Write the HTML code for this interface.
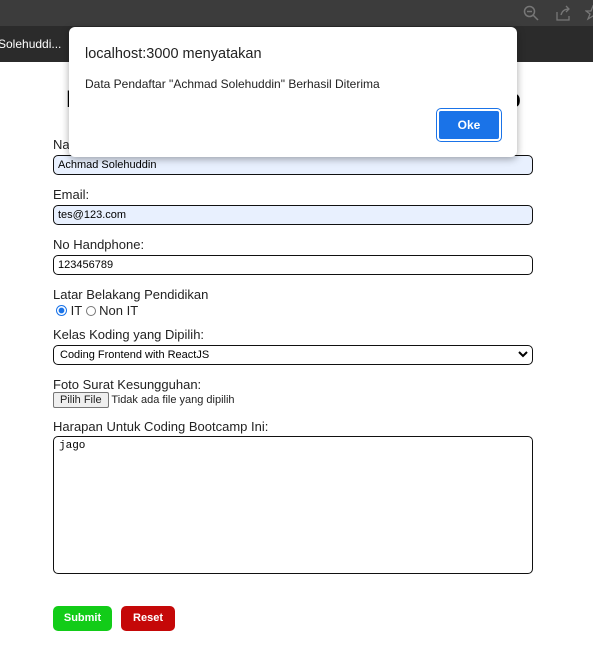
<!DOCTYPE html>
<html><head><style>
body{margin:0;width:593px;height:666px;position:relative;background:#fff;font-family:"Liberation Sans",Arial,sans-serif;overflow:hidden}
.top{position:absolute;left:0;top:0;width:593px;height:26px;background:#3c3c3c}
.tab{position:absolute;left:0;top:26px;width:593px;height:36px;background:#2b2b2b;color:#fff;font-size:12px}
.tab span{position:absolute;left:-2px;top:11px}
.a{position:absolute;left:53px;font-size:13px;color:#222}
.in{position:absolute;left:53px;width:480px;height:20px;border:1px solid #111;border-radius:5px;font-size:11px;line-height:18px;padding-left:4px;box-sizing:border-box}
h1{position:absolute;left:0;width:587px;top:86px;margin:0;text-align:center;font-size:24.5px;font-weight:bold}
.dlg{position:absolute;left:69px;top:27px;width:448px;height:130px;background:#fff;border-radius:6px;box-shadow:0 2px 8px rgba(0,0,0,.35)}
.btn{position:absolute;top:606px;height:25px;border-radius:5px;color:#fff;font-size:11px;font-weight:bold;text-align:center;line-height:25px}
</style></head><body>
<div class="top">
<svg style="position:absolute;left:523px;top:5px" width="16" height="16" fill="none" stroke="#777" stroke-width="1.5"><circle cx="6.5" cy="6.5" r="5"/><path d="M4 6.5h5M10 10l5 5"/></svg>
<svg style="position:absolute;left:555px;top:5px" width="16" height="16" fill="none" stroke="#777" stroke-width="1.3"><path d="M2 7v8h12v-4M6 10c1-4 4-6 8-6M11 1l3 3-3 3"/></svg>
<svg style="position:absolute;left:585px;top:5px" width="16" height="16" fill="none" stroke="#777" stroke-width="1.3"><path d="M8 1l2 5h5l-4 3 2 5-5-3-5 3 2-5-4-3h5z"/></svg>
</div>
<div class="tab"><span>Solehuddi...</span></div>
<h1>Pendaftaran Peserta Coding Bootcamp</h1>
<div class="a" style="top:137px">Nama Lengkap:</div>
<div class="in" style="top:155px;background:#e8f0fe">Achmad Solehuddin</div>
<div class="a" style="top:187px">Email:</div>
<div class="in" style="top:205px;background:#e8f0fe">tes@123.com</div>
<div class="a" style="top:237px">No Handphone:</div>
<div class="in" style="top:255px">123456789</div>
<div class="a" style="top:287px">Latar Belakang Pendidikan</div>
<div class="a" style="top:303px;font-size:13px"><span style="display:inline-block;width:9px;height:9px;border-radius:50%;border:1px solid #1a73e8;background:radial-gradient(#1a73e8 40%,#fff 50%);vertical-align:-1px;margin-left:3px"></span> IT <span style="display:inline-block;width:8px;height:8px;border-radius:50%;border:1px solid #777;vertical-align:-1px"></span> Non IT</div>
<div class="a" style="top:327px">Kelas Koding yang Dipilih:</div>
<div class="in" style="top:345px;padding-left:6px">Coding Frontend with ReactJS
<svg style="position:absolute;right:4px;top:5px" width="10" height="8"><path d="M1 1l4 4 4-4" stroke="#000" stroke-width="2" fill="none"/></svg></div>
<div class="a" style="top:377px">Foto Surat Kesungguhan:</div>
<div class="a" style="top:392px;font-size:11px"><span style="display:inline-block;border:1px solid #767676;background:#efefef;padding:1px 6px;border-radius:2px">Pilih File</span> Tidak ada file yang dipilih</div>
<div class="a" style="top:419px">Harapan Untuk Coding Bootcamp Ini:</div>
<div class="in" style="top:436px;height:138px;line-height:normal;padding-top:3px;font-family:'Liberation Mono',monospace;font-size:11px;padding-left:5px">jago</div>
<div class="btn" style="left:53px;width:59px;background:#12cc18">Submit</div>
<div class="btn" style="left:121px;width:54px;background:#c50808">Reset</div>
<div class="dlg">
<div style="position:absolute;left:16px;top:19px;font-size:14.5px;color:#222">localhost:3000 menyatakan</div>
<div style="position:absolute;left:16px;top:50px;font-size:12px;color:#222">Data Pendaftar "Achmad Solehuddin" Berhasil Diterima</div>
<div style="position:absolute;left:368px;top:82px;width:60px;height:28px;background:#1a73e8;border:2px solid #fff;outline:1px solid #1a73e8;border-radius:4px;color:#fff;font-weight:bold;font-size:12px;text-align:center;line-height:28px">Oke</div>
</div>
</body></html>
